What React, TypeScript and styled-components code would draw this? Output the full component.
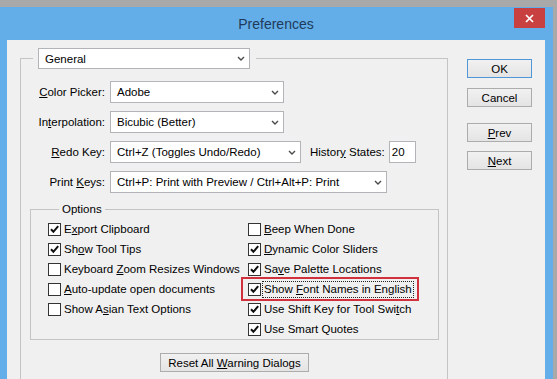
import React from 'react';
import styled, { createGlobalStyle } from 'styled-components';

const GlobalStyle = createGlobalStyle`
  html, body {
    margin: 0;
    padding: 0;
  }
  body {
    background: #a9a9a9;
    font-family: 'Liberation Sans', Arial, sans-serif;
    font-size: 11.5px;
    color: #000;
  }
`;

function Chevron() {
    return (
        <svg width='8' height='5' viewBox='0 0 8 5'>
            <path d='M1 1 L4 4 L7 1' fill='none' stroke='#4a4a4a' strokeWidth='1.4' />
        </svg>
    );
}

function Tick() {
    return (
        <svg width='11' height='11' viewBox='0 0 11 11'>
            <path d='M2 5.2 L4.4 7.8 L9.2 2.2' fill='none' stroke='#111' strokeWidth='2' />
        </svg>
    );
}

function Check({ checked, label, highlight }: { checked: boolean; label: React.ReactNode; highlight?: boolean }) {
    return (
        <CheckRow $highlight={highlight}>
            <Box>{checked && <Tick />}</Box>
            <CheckText $focus={highlight}>{label}</CheckText>
        </CheckRow>
    );
}

function Select({ value, width, height }: { value: string; width: number; height?: number }) {
    return (
        <SelectBox $width={width} $height={height}>
            <span>{value}</span>
            <Chevron />
        </SelectBox>
    );
}

export default function App() {
    return (
        <>
            <GlobalStyle />
            <Window>
                <TitleBar>
                    <Title>Preferences</Title>
                    <CloseButton>
                        <svg width='9' height='9' viewBox='0 0 9 9'>
                            <path d='M1 1 L8 8 M8 1 L1 8' stroke='#fff' strokeWidth='1.7' />
                        </svg>
                    </CloseButton>
                </TitleBar>
                <Client>
                    <MainFrame>
                        <MainLegend>
                            <Select value='General' width={212} height={21} />
                        </MainLegend>
                        <FormGrid>
                            <FieldLabel><U>C</U>olor Picker:</FieldLabel>
                            <Select value='Adobe' width={174} />
                            <FieldLabel>In<U>t</U>erpolation:</FieldLabel>
                            <Select value='Bicubic (Better)' width={174} />
                            <FieldLabel><U>R</U>edo Key:</FieldLabel>
                            <InlineFields>
                                <Select value='Ctrl+Z (Toggles Undo/Redo)' width={191} />
                                <SideLabel>Histor<U>y</U> States:</SideLabel>
                                <NumberInput>20</NumberInput>
                            </InlineFields>
                            <FieldLabel>Print <U>K</U>eys:</FieldLabel>
                            <Select value='Ctrl+P: Print with Preview / Ctrl+Alt+P: Print' width={277} />
                        </FormGrid>
                        <OptionsFrame>
                            <OptionsLegend>Options</OptionsLegend>
                            <OptionsColumns>
                                <Column>
                                    <Check checked label={<>E<U>x</U>port Clipboard</>} />
                                    <Check checked label={<>Sh<U>o</U>w Tool Tips</>} />
                                    <Check checked={false} label={<>Keyboard <U>Z</U>oom Resizes Windows</>} />
                                    <Check checked={false} label={<><U>A</U>uto-update open documents</>} />
                                    <Check checked={false} label={<>Show A<U>s</U>ian Text Options</>} />
                                </Column>
                                <Column>
                                    <Check checked={false} label={<><U>B</U>eep When Done</>} />
                                    <Check checked label={<><U>D</U>ynamic Color Sliders</>} />
                                    <Check checked label={<>Sa<U>v</U>e Palette Locations</>} />
                                    <Check checked highlight label={<>Show <U>F</U>ont Names in English</>} />
                                    <Check checked label={<>Use Shift Key for Tool Swi<U>t</U>ch</>} />
                                    <Check checked label='Use Smart Quotes' />
                                </Column>
                            </OptionsColumns>
                        </OptionsFrame>
                        <ButtonRow>
                            <Button $width={149}>
                                <span>Reset All <U>W</U>arning Dialogs</span>
                            </Button>
                        </ButtonRow>
                    </MainFrame>
                    <SideColumn>
                        <Button $width={65} $primary>OK</Button>
                        <Button $width={65} $top={10}>Cancel</Button>
                        <Button $width={65} $top={16}><U>P</U>rev</Button>
                        <Button $width={65} $top={9}><U>N</U>ext</Button>
                    </SideColumn>
                </Client>
            </Window>
        </>
    );
}

const Window = styled.div`
    box-sizing: border-box;
    width: 553px;
    height: 372px;
    margin-top: 7px;
    padding: 0 8px 0 7px;
    background: #63aee8;
    display: flex;
    flex-direction: column;
    overflow: hidden;
`;

const TitleBar = styled.div`
    height: 33px;
    display: grid;
    grid-template-columns: 31px 1fr 31px;
    align-items: start;
    flex-shrink: 0;
`;

const Title = styled.div`
    grid-column: 2;
    text-align: center;
    line-height: 34px;
    font-size: 14px;
    color: #1f3a5c;
`;

const CloseButton = styled.div`
    grid-column: 3;
    width: 31px;
    height: 20px;
    margin-top: 1px;
    margin-right: -1px;
    background: #c8403f;
    display: flex;
    align-items: center;
    justify-content: center;
`;

const Client = styled.div`
    flex: 1;
    min-height: 0;
    background: #f0f0f0;
    display: flex;
    align-items: flex-start;
    padding: 8px 0 0 13px;
    overflow: hidden;
`;

const MainFrame = styled.fieldset`
    box-sizing: border-box;
    width: 428px;
    min-width: 0;
    margin: 0;
    padding: 12px 0 30px 0;
    border: 1px solid #c4c4c4;
    flex-shrink: 0;
`;

const MainLegend = styled.legend`
    margin-left: 12px;
    padding: 0 6px 0 5px;
`;

const SelectBox = styled.div<{ $width: number; $height?: number }>`
    box-sizing: border-box;
    width: ${(p) => p.$width}px;
    height: ${(p) => p.$height || 22}px;
    background: #fff;
    border: 1px solid #b2b4b8;
    display: flex;
    align-items: center;
    justify-content: space-between;
    padding: 0 4px 0 6px;
    white-space: nowrap;
`;

const FormGrid = styled.div`
    display: grid;
    grid-template-columns: 84px auto;
    column-gap: 5px;
    row-gap: 8px;
    align-items: center;
    justify-items: start;
`;

const FieldLabel = styled.div`
    justify-self: end;
    white-space: nowrap;
`;

const InlineFields = styled.div`
    display: flex;
    align-items: center;
`;

const SideLabel = styled.div`
    margin-left: 9px;
    margin-right: 4px;
    white-space: nowrap;
`;

const NumberInput = styled.div`
    box-sizing: border-box;
    width: 27px;
    height: 22px;
    background: #fff;
    border: 1px solid #b2b4b8;
    padding-left: 2px;
    display: flex;
    align-items: center;
`;

const U = styled.span`
    text-decoration: underline;
    text-underline-offset: 1px;
`;

const OptionsFrame = styled.fieldset`
    min-width: 0;
    margin: 9px 8px 0 9px;
    padding: 3px 0 0 17px;
    border: 1px solid #c4c4c4;
`;

const OptionsLegend = styled.legend`
    margin-left: 11px;
    padding: 0 3px;
    line-height: 14px;
`;

const OptionsColumns = styled.div`
    display: grid;
    grid-template-columns: 200px auto;
    align-items: start;
`;

const Column = styled.div`
    display: flex;
    flex-direction: column;
    align-items: flex-start;
`;

const CheckRow = styled.div<{ $highlight?: boolean }>`
    height: 20px;
    display: flex;
    align-items: center;
    gap: 2px;
    white-space: nowrap;
    ${(p) =>
        p.$highlight &&
        `
        box-sizing: border-box;
        width: 174px;
        margin-left: -5px;
        padding-left: 5px;
        outline: 2px solid #d0313c;
    `}
`;

const Box = styled.div`
    box-sizing: border-box;
    width: 13px;
    height: 13px;
    border: 1px solid #333;
    background: #fff;
    display: flex;
    align-items: center;
    justify-content: center;
    flex-shrink: 0;
`;

const CheckText = styled.span<{ $focus?: boolean }>`
    line-height: 15px;
    padding: 0 1px;
    ${(p) => p.$focus && 'outline: 1px dotted #222; outline-offset: 0;'}
`;

const ButtonRow = styled.div`
    display: flex;
    justify-content: center;
    margin: 13px 8px 0 9px;
`;

const Button = styled.div<{ $width: number; $primary?: boolean; $top?: number }>`
    box-sizing: border-box;
    width: ${(p) => p.$width}px;
    height: 19px;
    margin-top: ${(p) => p.$top || 0}px;
    border: 1px solid ${(p) => (p.$primary ? '#4f97d6' : '#acacac')};
    background: linear-gradient(#f1f1f1, #e4e4e4);
    display: flex;
    align-items: center;
    justify-content: center;
    white-space: nowrap;
`;

const SideColumn = styled.div`
    display: flex;
    flex-direction: column;
    margin-left: 19px;
    padding-top: 11px;
`;
